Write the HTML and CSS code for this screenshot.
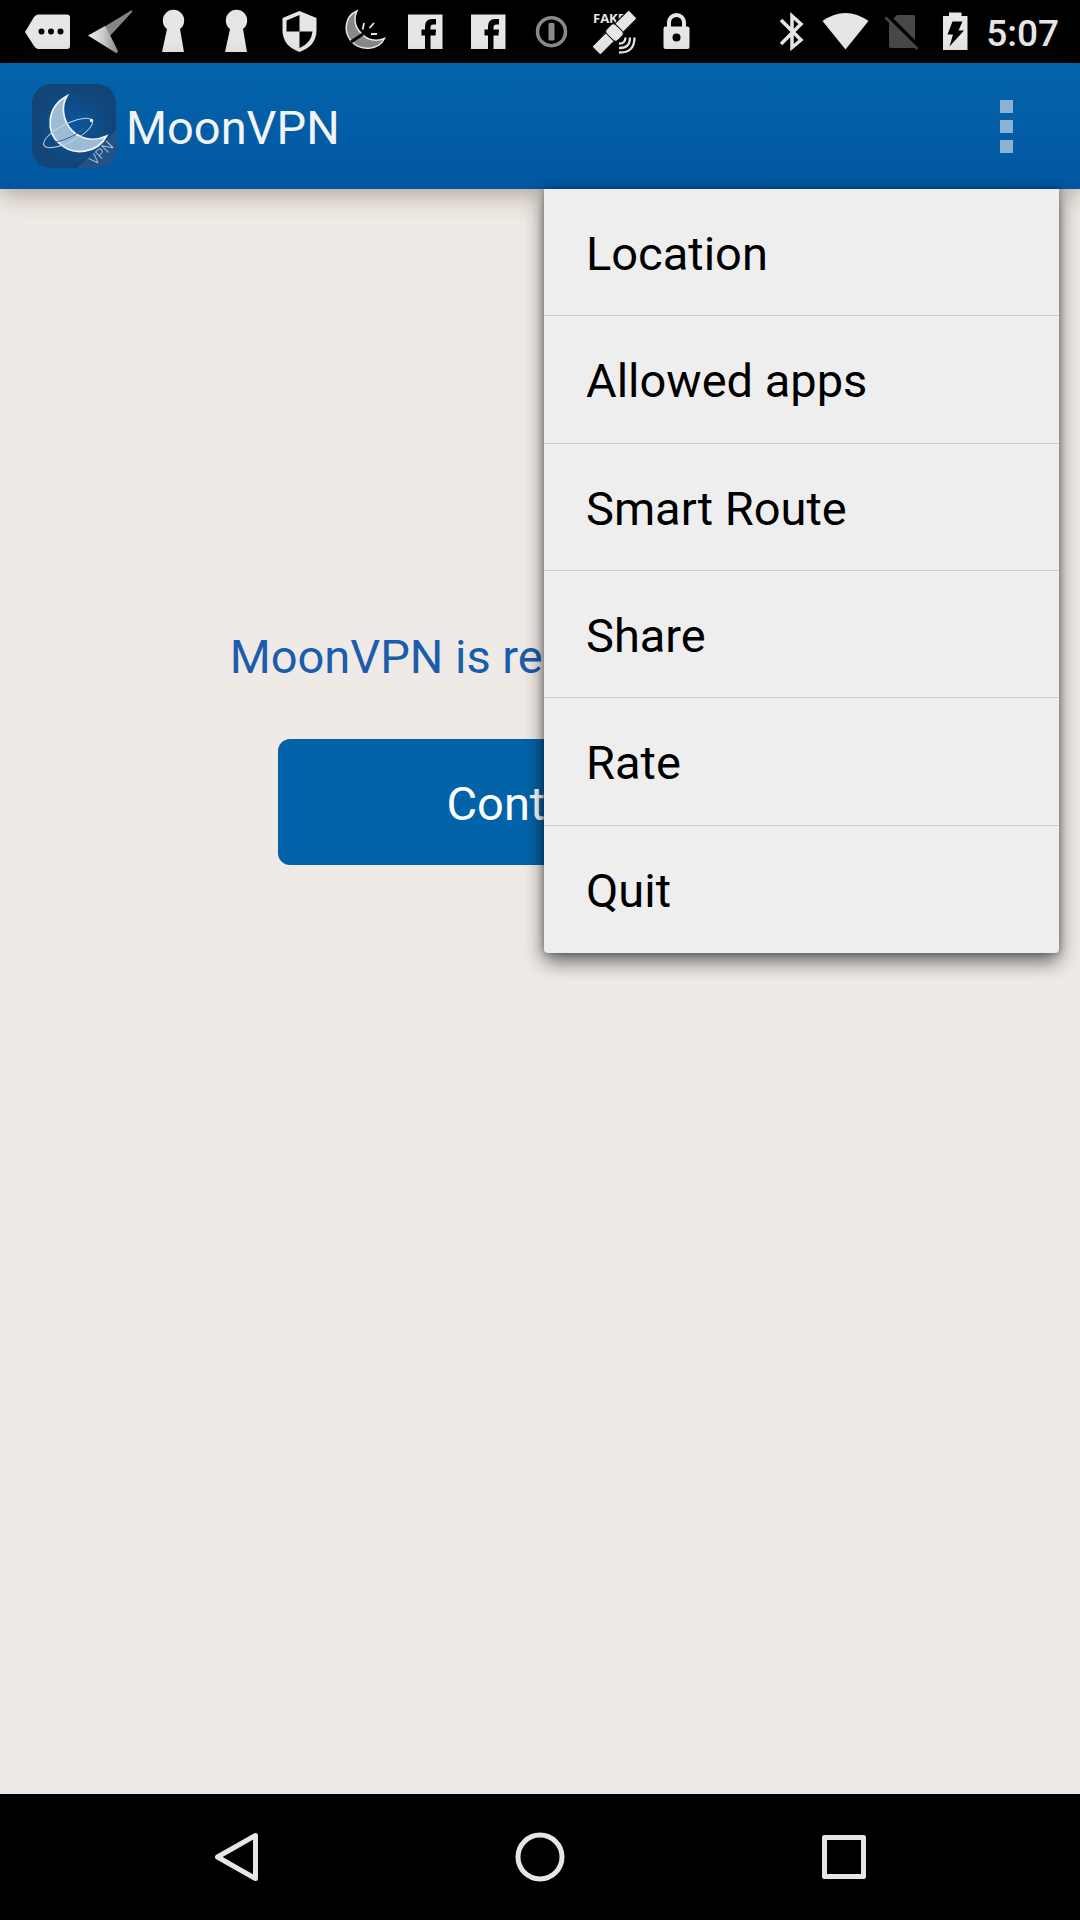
FILE: index.html
```html
<!DOCTYPE html>
<html lang="en">
<head>
<meta charset="utf-8">
<meta name="viewport" content="width=device-width, initial-scale=1">
<title>MoonVPN</title>
<link rel="stylesheet" href="styles.css">
</head>
<body>
<div class="screen">
  <div class="status-bar">
    <div class="notifications">
      <svg class="note" viewBox="0 0 63 63" aria-hidden="true"><path fill="#e6e6e6" d="M9 32 18 17Q20 14.500 22 14.500H51Q54 14.500 54 17.500V46Q54 49 51 49H22Q20 49 18 46Z"/><g fill="#000"><circle cx="25.500" cy="31.500" r="3"/><circle cx="35" cy="31.500" r="3"/><circle cx="44.500" cy="31.500" r="3"/></g></svg>
      <svg class="note" viewBox="0 0 63 63" aria-hidden="true"><defs><linearGradient id="wing"><stop offset="0" stop-color="#eee"/><stop offset=".5" stop-color="#ccc"/><stop offset="1" stop-color="#888"/></linearGradient></defs><path fill="#858585" d="M25 27 52 10.500Q54 10 53 12L31 36Z"/><path fill="url(#wing)" d="M9 35.500 26 26 31 35 39 51Q39 53 37 53Z"/></svg>
      <svg class="note" viewBox="0 0 63 63" aria-hidden="true"><path fill="#e6e6e6" d="M20 52 25 29A10.700 10.700 0 1 1 38 29L42 52Z"/></svg>
      <svg class="note" viewBox="0 0 63 63" aria-hidden="true"><path fill="#e6e6e6" d="M20 52 25 29A10.700 10.700 0 1 1 38 29L42 52Z"/></svg>
      <svg class="note" viewBox="0 0 63 63" aria-hidden="true"><path fill="#e6e6e6" d="M31.500 11 48.500 18V30Q48.500 46 31.500 52 14.500 46 14.500 30V18Z"/><path d="M31.500 15V31.500H18.500V20.500ZM31.500 31.500H44.500Q43.500 43 31.500 48Z"/></svg>
      <svg class="note" viewBox="0 0 63 63" aria-hidden="true"><path fill="#888" stroke="#e6e6e6" stroke-width="1.500" d="M26 11C14 16 12 31 20 41 30 52 48 50 53.500 38.500 45 42 36 40 31 34 24 28 22 19 26 11Z"/><path stroke="#000" stroke-width="3" d="M32 34 20 42"/><path stroke="#e6e6e6" stroke-width="1.800" d="M31.700 29.500 33 23M38.500 28 43 23M40 34 46 34"/></svg>
      <svg class="note" viewBox="0 0 63 63" aria-hidden="true"><path fill="#e6e6e6" d="M14 14.500H48.500V49H14Z"/><path d="M31 49V35.500H27.500V29.500H31V26.500Q31 19 38 19H42V24.500H39.500Q36.500 24.500 36.500 27.500V29.500H42L41.500 35.500H36.500V49Z"/></svg>
      <svg class="note" viewBox="0 0 63 63" aria-hidden="true"><path fill="#e6e6e6" d="M14 14.500H48.500V49H14Z"/><path d="M31 49V35.500H27.500V29.500H31V26.500Q31 19 38 19H42V24.500H39.500Q36.500 24.500 36.500 27.500V29.500H42L41.500 35.500H36.500V49Z"/></svg>
      <svg class="note" viewBox="0 0 63 63" aria-hidden="true"><circle cx="31.500" cy="31.700" r="14" fill="none" stroke="#8a8a8a" stroke-width="3.500"/><rect x="28.500" y="23" width="6" height="17.500" rx="1" fill="#8a8a8a"/></svg>
      <svg class="note" viewBox="0 0 63 63" aria-hidden="true"><text class="fake-label" x="10" y="23">FAKE</text><g fill="#e6e6e6" stroke="#000" transform="translate(31.500 32.500) rotate(-45)"><rect x="5" y="-6" width="21" height="12" rx="1.500"/><rect x="-26" y="-6" width="21" height="12" rx="1.500"/><rect x="-6.500" y="-8" width="13" height="16" rx="4"/></g><path fill="none" stroke="#e6e6e6" stroke-width="2.300" d="M36 43.500Q42 44 42.500 37.500M36 48Q47 48.500 47 37.500M36 52.500Q51.500 53 51.500 37.500"/></svg>
      <svg class="note" viewBox="0 0 63 63" aria-hidden="true"><path fill="none" stroke="#e6e6e6" stroke-width="4" d="M23 28V22.500A7.500 7.500 0 0 1 38 22.500V28"/><rect x="17.500" y="26.500" width="26" height="22.500" rx="2" fill="#e6e6e6"/><circle cx="30.500" cy="37.500" r="4"/></svg>
    </div>
    <div class="system">
      <svg class="sys" viewBox="0 0 55 63" aria-hidden="true"><path fill="none" stroke="#e6e6e6" stroke-width="3.500" d="M17 20 37 40 28 47.500V16L37 24 17 44"/></svg>
      <svg class="sys" viewBox="0 0 55 63" aria-hidden="true"><path fill="#e6e6e6" d="M3.500 21Q26.500 5 49.500 21L26.500 49.500Z"/></svg>
      <svg class="sys" viewBox="0 0 55 63" aria-hidden="true"><path fill="#484848" d="M15 23 23 15H39Q41 15 41 17V46Q41 48 39 48H17Q15 48 15 46Z"/><path stroke="#000" stroke-width="4" d="M14 16 46 48"/><path stroke="#484848" stroke-width="2.500" d="M11.500 17.500 43.500 49"/></svg>
      <svg class="sys" viewBox="0 0 55 63" aria-hidden="true"><path fill="#e6e6e6" d="M14 16H20V12.500H32.500V16H38.500V50H14Z"/><path d="M23.500 21.500H33.500L29.500 30.500H35L20.500 46.500 24 34.500H18.500Z"/></svg>
      <time class="clock">5:07</time>
    </div>
  </div>

  <header class="app-bar">
    <svg class="app-icon" viewBox="0 0 84 84" aria-hidden="true">
      <defs>
        <radialGradient id="sky"><stop offset="0" stop-color="#0a569d"/><stop offset="1" stop-color="#124476"/></radialGradient>
        <clipPath id="tile"><rect width="84" height="84" rx="19"/></clipPath>
      </defs>
      <g clip-path="url(#tile)">
        <rect width="84" height="84" fill="url(#sky)"/>
        <path fill="#225384" d="M45 84 84 46V84Z"/>
      </g>
      <path fill="#9dbbd5" stroke="#edf4fa" stroke-width="1.700" d="M35 12C14 23 14 49 27 59 41 73 66 69 74.500 52 60 59 45 54 37 43 31 34 29 22 35 12Z"/>
      <ellipse cx="36" cy="49" rx="27" ry="9" fill="none" stroke="#bcd2e8" transform="rotate(-27 36 49)"/>
      <path stroke="#32629a" fill="none" d="M23 58Q40 55 52 44"/>
      <circle cx="59.500" cy="36.500" r="1.700" fill="#fff"/>
      <text class="icon-label" x="63" y="82" transform="rotate(-45 63 82)">VPN</text>
    </svg>
    <h1 class="title">MoonVPN</h1>
    <button class="overflow" type="button" aria-label="More options" aria-expanded="true"><span class="dot"></span><span class="dot"></span><span class="dot"></span></button>
    <div class="menu" role="menu">
      <button class="menu-item" type="button" role="menuitem">Location</button>
      <button class="menu-item" type="button" role="menuitem">Allowed apps</button>
      <button class="menu-item" type="button" role="menuitem">Smart Route</button>
      <button class="menu-item" type="button" role="menuitem">Share</button>
      <button class="menu-item" type="button" role="menuitem">Rate</button>
      <button class="menu-item" type="button" role="menuitem">Quit</button>
    </div>
  </header>

  <main class="content">
    <p class="message">MoonVPN is ready to connect</p>
    <button class="continue" type="button">Continue</button>
  </main>

  <nav class="nav-bar">
    <button class="nav-button" type="button" aria-label="Back"><svg class="nav-icon" viewBox="0 0 54 54"><path d="M46.500 5.500V48.500L8.500 27Z"/></svg></button>
    <button class="nav-button" type="button" aria-label="Home"><svg class="nav-icon" viewBox="0 0 54 54"><circle cx="27" cy="27" r="22"/></svg></button>
    <button class="nav-button" type="button" aria-label="Recent apps"><svg class="nav-icon" viewBox="0 0 54 54"><rect x="7.500" y="7.500" width="39" height="39"/></svg></button>
  </nav>
</div>
</body>
</html>
```
FILE: styles.css
```css
* {
  box-sizing: border-box;
}

body {
  margin: 0;
  background: #efeae5;
  font-family: Roboto, "Liberation Sans", sans-serif;
  font-size: 47px;
  line-height: 56px;
}

button {
  margin: 0;
  padding: 0;
  border: 0;
  background: none;
  color: inherit;
  font: inherit;
}

.screen {
  display: flex;
  flex-direction: column;
  min-height: 100vh;
}

.status-bar {
  display: flex;
  justify-content: space-between;
  height: 63px;
  padding: 0 21px 0 16px;
  background: #000;
}

.notifications,
.system {
  display: flex;
  align-items: center;
}

.note {
  width: 63px;
  height: 63px;
}

.sys {
  width: 55px;
  height: 63px;
}

.fake-label {
  fill: #e6e6e6;
  font-family: "Open Sans", sans-serif;
  font-size: 13px;
  font-weight: 700;
}

.clock {
  padding: 4px 0 0 2px;
  color: #e6e6e6;
  font-size: 37px;
  font-weight: 500;
  line-height: 44px;
}

.app-bar {
  position: relative;
  display: flex;
  align-items: center;
  gap: 10px;
  height: 126px;
  padding: 0 32px;
  background: linear-gradient(#0464aa, #0257a2);
  box-shadow: 0 4px 24px rgba(60, 40, 30, 0.4);
}

.app-icon {
  flex: none;
  width: 84px;
  height: 84px;
}

.icon-label {
  fill: #b9cde0;
  font-size: 14px;
  font-weight: 300;
}

.title {
  flex: 1;
  margin: 0;
  padding-top: 4px;
  color: #f3f3f3;
  font-size: 47px;
  font-weight: 400;
}

.overflow {
  display: flex;
  flex-direction: column;
  align-items: center;
  gap: 7px;
  width: 84px;
}

.dot {
  width: 13px;
  height: 13px;
  background: #8bb1d3;
}

.menu {
  position: absolute;
  z-index: 1;
  top: 100%;
  right: 21px;
  display: grid;
  grid-auto-rows: 1fr;
  width: 515px;
  height: 764px;
  border-radius: 0 0 4px 4px;
  background: #eee;
  color: #000;
  box-shadow: 0 8px 20px rgba(0, 0, 0, 0.6), 0 0 6px rgba(0, 0, 0, 0.3);
}

.menu-item {
  padding: 4px 42px 0;
  text-align: left;
}

.menu-item:not(:last-child) {
  border-bottom: 1px solid #ccc;
}

.content {
  flex: 1;
  display: flex;
  flex-direction: column;
  align-items: center;
  gap: 54px;
  padding: 440px 32px 32px;
}

.message {
  margin: 0;
  color: #1a5cad;
}

.continue {
  width: 524px;
  max-width: 100%;
  height: 126px;
  padding-top: 4px;
  border-radius: 12px;
  background: #0363a9;
  color: #fff;
}

.nav-bar {
  display: grid;
  grid-template-columns: repeat(3, 1fr);
  height: 126px;
  padding: 0 84px;
  background: #000;
}

.nav-button {
  display: grid;
  place-items: center;
}

.nav-icon {
  width: 54px;
  height: 54px;
  fill: none;
  stroke: #e6e6e6;
  stroke-width: 5;
  stroke-linejoin: round;
}
```
